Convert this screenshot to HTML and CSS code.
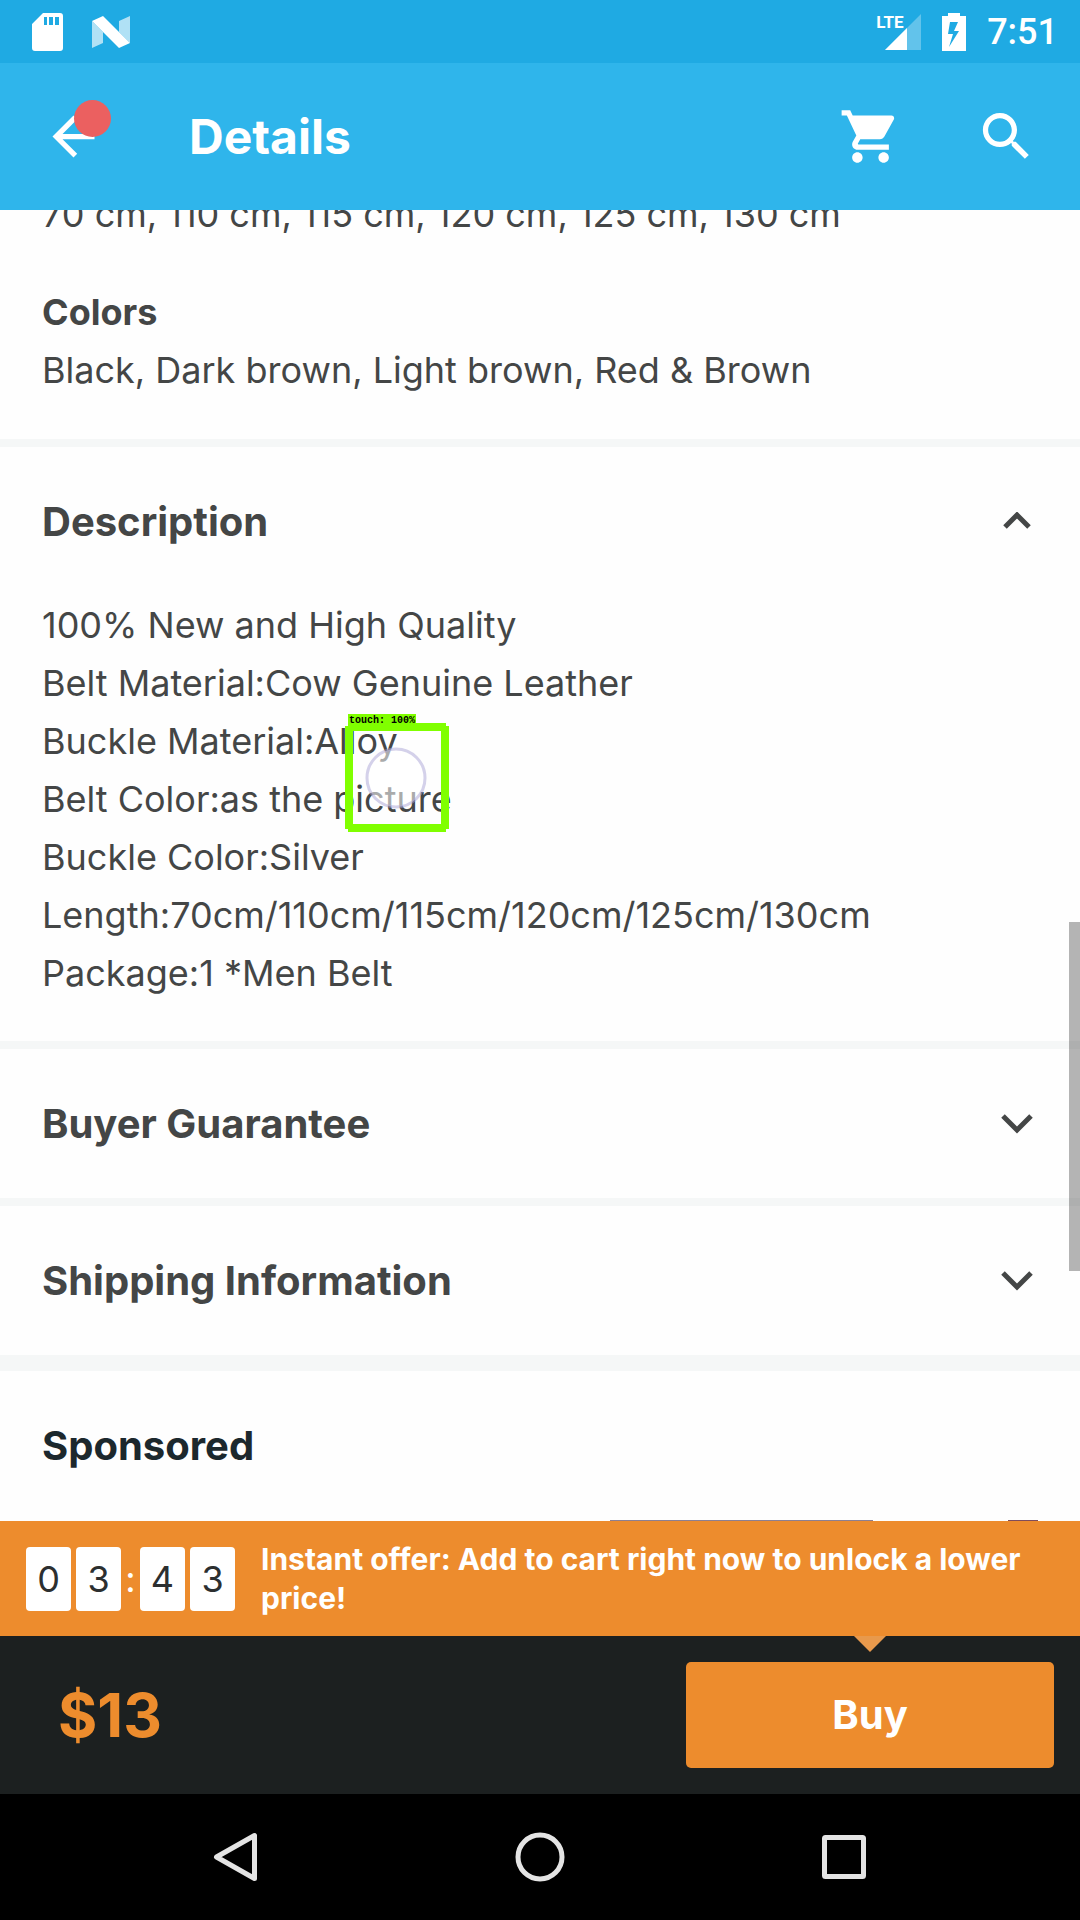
FILE: index.html
```html
<!DOCTYPE html>
<html lang="en">
<head>
<meta charset="utf-8">
<meta name="viewport" content="width=device-width, initial-scale=1">
<title>Details</title>
<link rel="stylesheet" href="styles.css">
</head>
<body>
<div class="status-bar">
  <div class="status-group status-left">
    <svg class="sd-icon" viewBox="0 0 31 38" aria-hidden="true"><path fill="#fff" fill-rule="evenodd" d="M11 0h17a3 3 0 0 1 3 3v32a3 3 0 0 1-3 3H3a3 3 0 0 1-3-3V11zM12 4v8h3V4zM17 4v8h4V4zM23 4v8h4V4z"/></svg>
    <svg class="n-icon" viewBox="0 0 38 32" aria-hidden="true"><path fill="#fff" fill-opacity=".65" d="M0 5l11 11v11L0 32zM38 0v27L27 16V5z"/><path fill="#fff" d="M0 5L11 0l27 27-11 5z"/></svg>
  </div>
  <div class="status-group status-right">
    <div class="signal">
      <svg class="signal-icon" viewBox="0 0 36 36" aria-hidden="true"><path fill="#fff" fill-opacity=".3" d="M36 0v36H0z"/><path fill="#fff" d="M22 14v22H0z"/></svg>
      <span class="lte">LTE</span>
    </div>
    <svg class="battery-icon" viewBox="0 0 24 38" aria-hidden="true"><path fill="#fff" fill-rule="evenodd" d="M6 0h12v3h6v35H0V3h6zM8 9L6 21h5L7 34l10-16h-5l4-9z"/></svg>
    <span class="clock">7:51</span>
  </div>
</div>

<header class="app-bar">
  <button class="icon-button back" aria-label="Back">
    <svg viewBox="0 0 24 24" aria-hidden="true"><path d="M20 11H7.83l5.59-5.59L12 4l-8 8 8 8 1.41-1.41L7.83 13H20v-2z"/></svg>
    <span class="badge"></span>
  </button>
  <h1 class="app-title">Details</h1>
  <button class="icon-button cart" aria-label="Cart">
    <svg viewBox="0 0 24 24" aria-hidden="true"><path d="M7 18c-1.1 0-1.99.9-1.99 2S5.9 22 7 22s2-.9 2-2-.9-2-2-2zM1 2v2h2l3.6 7.59-1.35 2.45c-.16.28-.25.61-.25.96 0 1.1.9 2 2 2h12v-2H7.42c-.14 0-.25-.11-.25-.25l.03-.12.9-1.63h7.45c.75 0 1.41-.41 1.75-1.03l3.58-6.49c.08-.14.12-.31.12-.48 0-.55-.45-1-1-1H5.21l-.94-2H1zm16 16c-1.1 0-1.99.9-1.99 2s.89 2 1.99 2 2-.9 2-2-.9-2-2-2z"/></svg>
  </button>
  <button class="icon-button search" aria-label="Search">
    <svg viewBox="0 0 24 24" aria-hidden="true"><path d="M15.5 14h-.79l-.28-.27C15.41 12.59 16 11.11 16 9.5 16 5.91 13.09 3 9.5 3S3 5.91 3 9.5 5.91 16 9.5 16c1.61 0 3.09-.59 4.23-1.57l.27.28v.79l5 4.99L20.49 19l-4.99-5zm-6 0C7.01 14 5 11.99 5 9.5S7.01 5 9.5 5 14 7.01 14 9.5 11.99 14 9.5 14z"/></svg>
  </button>
</header>

<main class="content">
  <div class="scrolled">
    <section class="section options">
      <p class="sizes">70 cm, 110 cm, 115 cm, 120 cm, 125 cm, 130 cm</p>
      <h2 class="label">Colors</h2>
      <p>Black, Dark brown, Light brown, Red &amp; Brown</p>
    </section>
    <section class="section">
      <button class="section-head" aria-expanded="true">Description
        <svg class="chevron" viewBox="0 0 32 20" aria-hidden="true"><path d="M4 15L16 3l12 12"/></svg>
      </button>
      <div class="section-body">
        <p>100% New and High Quality</p>
        <p>Belt Material:Cow Genuine Leather</p>
        <p>Buckle Material:Alloy</p>
        <p>Belt Color:as the picture</p>
        <p>Buckle Color:Silver</p>
        <p>Length:70cm/110cm/115cm/120cm/125cm/130cm</p>
        <p>Package:1 *Men Belt</p>
      </div>
    </section>
    <section class="section">
      <button class="section-head" aria-expanded="false">Buyer Guarantee
        <svg class="chevron" viewBox="0 0 32 20" aria-hidden="true"><path d="M2 2l14 14L30 2"/></svg>
      </button>
    </section>
    <section class="section last">
      <button class="section-head" aria-expanded="false">Shipping Information
        <svg class="chevron" viewBox="0 0 32 20" aria-hidden="true"><path d="M2 2l14 14L30 2"/></svg>
      </button>
    </section>
    <section class="sponsored">
      <h2 class="section-head">Sponsored</h2>
      <div class="thumbs"><span class="thumb wide"></span><span class="thumb narrow"></span></div>
    </section>
  </div>
  <div class="scrollbar"></div>
  <div class="touch">
    <span class="touch-label">touch: 100%</span>
    <svg class="touch-box" viewBox="0 0 104 109" aria-hidden="true">
      <path fill="#80ff00" fill-rule="evenodd" d="M3 0h98v3h3v103h-3v3H3v-3H0V3h3zM8 8v93h88V8z"/>
      <circle cx="51" cy="55" r="29" fill="#fff" fill-opacity=".55" stroke="#a9a4d6" stroke-opacity=".5" stroke-width="3"/>
    </svg>
  </div>
</main>

<aside class="offer">
  <div class="timer">
    <span class="digit">0</span><span class="digit">3</span><span class="colon">:</span><span class="digit">4</span><span class="digit">3</span>
  </div>
  <p class="offer-text">Instant offer: Add to cart right now to unlock a lower price!</p>
</aside>

<div class="buy-bar">
  <span class="price">$13</span>
  <button class="buy">Buy</button>
</div>

<nav class="system-nav">
  <button class="nav-button" aria-label="Back"><svg viewBox="0 0 50 50" aria-hidden="true"><path d="M43.500 3.500v43L5.500 25z"/></svg></button>
  <button class="nav-button" aria-label="Home"><svg viewBox="0 0 50 50" aria-hidden="true"><circle cx="25" cy="25" r="22"/></svg></button>
  <button class="nav-button" aria-label="Recent apps"><svg viewBox="0 0 50 50" aria-hidden="true"><rect x="5.500" y="5.500" width="39" height="39" rx="1"/></svg></button>
</nav>
</body>
</html>
```
FILE: styles.css
```css
* { box-sizing: border-box; }

body {
  margin: 0;
  height: 100vh;
  display: flex;
  flex-direction: column;
  overflow: hidden;
  background: #fefefe;
  color: #444646;
  font-family: Inter, "Open Sans", sans-serif;
  font-size: 36px;
  line-height: 58px;
}

h1, h2, p { margin: 0; }

button {
  border: 0;
  padding: 0;
  background: none;
  color: inherit;
  font: inherit;
}

svg { display: block; }

/* status bar */
.status-bar {
  flex: none;
  display: flex;
  justify-content: space-between;
  align-items: center;
  height: 63px;
  padding: 0 22px 0 32px;
  background: #1faae3;
  color: #fff;
}
.status-group { display: flex; align-items: center; }
.status-left { gap: 29px; }
.status-right { gap: 21px; }
.sd-icon { width: 31px; height: 38px; }
.n-icon { width: 38px; height: 32px; }
.signal { position: relative; padding-left: 9px; }
.signal-icon { width: 36px; height: 36px; }
.lte {
  position: absolute;
  left: 0;
  top: 0;
  font: 700 17px/17px "Liberation Sans Narrow", Roboto, sans-serif;
}
.battery-icon { width: 24px; height: 38px; }
.clock { font: 500 36px/64px Roboto, sans-serif; }

/* app bar */
.app-bar {
  flex: none;
  display: flex;
  align-items: center;
  height: 147px;
  padding: 0 42px;
  background: #2fb5eb;
  color: #fff;
}
.icon-button { position: relative; width: 63px; height: 63px; }
.icon-button svg { width: 63px; height: 63px; fill: #fff; }
.badge {
  position: absolute;
  left: 32px;
  top: -5px;
  width: 37px;
  height: 37px;
  border-radius: 50%;
  background: #eb6060;
}
.app-title {
  flex: 1;
  padding-left: 84px;
  font-size: 48px;
  font-weight: 700;
}
.cart { margin-right: 73px; }

/* scrolling page */
.content {
  position: relative;
  flex: 1;
  min-height: 0;
  overflow: hidden;
}
.scrolled { margin-top: -25px; }
.section { border-bottom: 8px solid #f5f7f7; }
.section.last { border-bottom-width: 16px; }
.options { padding: 0 42px 40px; }
.sizes { margin-bottom: 40px; }
.label { font-size: 36px; font-weight: 700; }
.section-head {
  display: flex;
  justify-content: space-between;
  align-items: center;
  width: 100%;
  height: 149px;
  padding: 0 47px 0 42px;
  font-size: 40px;
  font-weight: 700;
  text-align: left;
}
.chevron {
  width: 32px;
  height: 20px;
  fill: none;
  stroke: #444646;
  stroke-width: 5;
}
.section-body { padding: 0 42px 39px; }
.sponsored { color: #1c282d; }
.thumbs { display: flex; gap: 135px; padding: 0 42px 0 610px; }
.thumb { height: 200px; }
.wide { width: 263px; background: #8d7f92; }
.narrow { width: 30px; background: #7e4c5c; }
.scrollbar {
  position: absolute;
  right: 0;
  top: 712px;
  width: 11px;
  height: 349px;
  background: rgba(0, 0, 0, .29);
}

/* touch marker */
.touch { position: absolute; left: 345px; top: 504px; }
.touch-label {
  display: block;
  position: relative;
  z-index: 1;
  width: 68px;
  height: 10px;
  margin-left: 3px;
  padding-left: 1px;
  background: #80ff00;
  color: #000;
  font: 700 10px/14px "Liberation Mono", monospace;
  white-space: nowrap;
}
.touch-box { width: 104px; height: 109px; margin-top: -1px; }

/* instant offer */
.offer {
  flex: none;
  display: flex;
  align-items: center;
  gap: 26px;
  height: 115px;
  padding: 0 42px 0 26px;
  background: #ed8c2d;
  color: #fff;
}
.timer { display: flex; gap: 5px; }
.digit {
  width: 45px;
  height: 64px;
  border-radius: 4px;
  background: #fff;
  color: #2c2f30;
  line-height: 64px;
  text-align: center;
}
.colon { display: flex; justify-content: center; width: 9px; line-height: 64px; }
.offer-text { flex: 1; font-size: 30px; font-weight: 700; line-height: 39px; }

/* price and buy button */
.buy-bar {
  position: relative;
  flex: none;
  display: flex;
  justify-content: space-between;
  align-items: center;
  height: 158px;
  padding: 0 26px 0 58px;
  background: #1c2020;
}
.price { color: #ed8c2d; font-size: 60px; font-weight: 700; }
.buy {
  width: 368px;
  height: 106px;
  border-radius: 5px;
  background: #ed8c2d;
  color: #fff;
  font-size: 40px;
  font-weight: 700;
}
.buy-bar::after {
  content: "";
  position: absolute;
  right: 194px;
  top: 0;
  border: 16px solid transparent;
  border-top-color: #e8994c;
  border-bottom: 0;
}

/* system navigation */
.system-nav {
  flex: none;
  display: flex;
  justify-content: center;
  align-items: center;
  gap: 254px;
  height: 126px;
  background: #000;
}
.nav-button svg {
  width: 50px;
  height: 50px;
  fill: none;
  stroke: #e4e4e4;
  stroke-width: 5;
  stroke-linejoin: round;
}
```
